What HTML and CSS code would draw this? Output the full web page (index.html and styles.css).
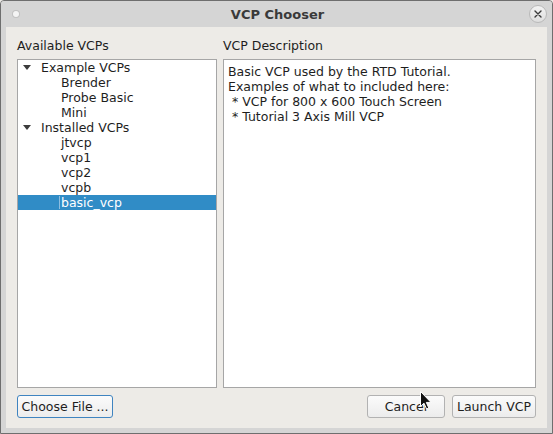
FILE: index.html
```html
<!DOCTYPE html>
<html>
<head>
<meta charset="utf-8">
<link rel="stylesheet" href="styles.css">
</head>
<body>
<div class="window">
  <div class="titlebar">
    <span class="menu-dot"></span>
    <span class="title">VCP Chooser</span>
    <span class="close">
      <svg width="8" height="8" viewBox="0 0 8 8"><path d="M1 1L7 7M7 1L1 7" stroke="#3a3a3a" stroke-width="1.4" stroke-linecap="round"/></svg>
    </span>
  </div>
  <div class="content">
    <div class="columns">
      <div class="col col-left">
        <div class="label">Available VCPs</div>
        <div class="box tree">
          <div class="row group"><span class="arrow"></span>Example VCPs</div>
          <div class="row child">Brender</div>
          <div class="row child">Probe Basic</div>
          <div class="row child">Mini</div>
          <div class="row group"><span class="arrow"></span>Installed VCPs</div>
          <div class="row child">jtvcp</div>
          <div class="row child">vcp1</div>
          <div class="row child">vcp2</div>
          <div class="row child">vcpb</div>
          <div class="row child selected"><span class="focus">basic_vcp</span></div>
        </div>
      </div>
      <div class="col col-right">
        <div class="label">VCP Description</div>
        <div class="box desc">
          <div class="line">Basic VCP used by the RTD Tutorial.</div>
          <div class="line">Examples of what to included here:</div>
          <div class="line"> * VCP for 800 x 600 Touch Screen</div>
          <div class="line"> * Tutorial 3 Axis Mill VCP</div>
        </div>
      </div>
    </div>
    <div class="buttons">
      <button class="btn btn-focus btn-choose">Choose File ...</button>
      <span class="spacer"></span>
      <button class="btn btn-cancel">Cancel</button>
      <button class="btn btn-launch">Launch VCP</button>
    </div>
  </div>
  <svg class="cursor" width="12" height="19" viewBox="0 0 12 19"><path d="M0.5 0.5 L0.5 15.5 L4 12.2 L6.6 18 L8.8 17 L6.3 11.4 L11 11.4 Z" fill="#111" stroke="#fff" stroke-width="1"/></svg>
</div>
</body>
</html>
```

FILE: styles.css
```css
html, body {
  margin: 0;
  padding: 0;
  background: #edebe7;
}
body {
  font-family: "DejaVu Sans", sans-serif;
  font-size: 12.5px;
  color: #1e1e1e;
}
.window {
  position: relative;
  width: 553px;
  height: 434px;
  box-sizing: border-box;
  border: 1px solid #6e6e6e;
  border-radius: 4px 4px 0 0;
  background: #d5d5d5;
  display: flex;
  flex-direction: column;
  overflow: hidden;
}
.titlebar {
  height: 26px;
  flex: none;
  display: flex;
  align-items: center;
  justify-content: center;
  position: relative;
  background: #d5d5d5;
}
.title {
  font-weight: bold;
  font-size: 13px;
  color: #3a3a3a;
  margin-left: 2px;
  margin-top: 1px;
}
.menu-dot {
  position: absolute;
  left: 12px;
  top: 10px;
  width: 6px;
  height: 6px;
  border-radius: 50%;
  background: #f4f4f4;
  box-shadow: 0 0 0 1px #c2c2c2;
}
.close {
  position: absolute;
  right: 5px;
  top: 4px;
  width: 18px;
  height: 18px;
  border-radius: 50%;
  box-sizing: border-box;
  border: 1px solid #b9b9b9;
  background: linear-gradient(#f3f3f3, #dedede);
  display: flex;
  align-items: center;
  justify-content: center;
}
.content {
  flex: 1;
  margin: 0 5px 5px 5px;
  background: #edebe7;
  padding: 11px 11px 10px 11px;
  display: flex;
  flex-direction: column;
}
.columns {
  flex: 1;
  display: flex;
  gap: 6px;
  min-height: 0;
}
.col {
  display: flex;
  flex-direction: column;
}
.col-left { width: 200px; }
.col-right { flex: 1; }
.label {
  height: 15px;
  line-height: 15px;
  margin-bottom: 6px;
  color: #1e1e1e;
}
.box {
  flex: 1;
  background: #ffffff;
  border: 1px solid #a6a6a6;
}
.row {
  height: 15px;
  line-height: 15px;
  position: relative;
  white-space: nowrap;
}
.group { padding-left: 23px; }
.child { padding-left: 43px; }
.arrow {
  position: absolute;
  left: 5px;
  top: 5px;
  width: 0;
  height: 0;
  border-left: 4px solid transparent;
  border-right: 4px solid transparent;
  border-top: 5px solid #3c3c3c;
}
.selected {
  background: #308cc6;
  color: #ffffff;
  padding-left: 41px;
}
.focus {
  display: inline-block;
  height: 13px;
  line-height: 13px;
  padding: 0 1px;
  border-left: 1px solid #8dbde0;
}
.desc {
  padding: 4px 4px;
}
.line {
  height: 15px;
  line-height: 15px;
  white-space: pre;
}
.buttons {
  flex: none;
  display: flex;
  margin-top: 7px;
  height: 23px;
  gap: 7px;
}
.spacer { flex: 1; }
.btn {
  font-family: "DejaVu Sans", sans-serif;
  font-size: 12.5px;
  color: #1e1e1e;
  height: 23px;
  box-sizing: border-box;
  border: 1px solid #b2b2b2;
  border-radius: 3px;
  background: linear-gradient(#fbfbfb, #ececec);
  padding: 0;
  margin: 0;
}
.btn-focus {
  border-color: #3f84c0;
}
.btn-choose { width: 96px; }
.btn-cancel { width: 78px; }
.btn-launch { width: 84px; }
.cursor {
  position: absolute;
  left: 419px;
  top: 390px;
}
```
